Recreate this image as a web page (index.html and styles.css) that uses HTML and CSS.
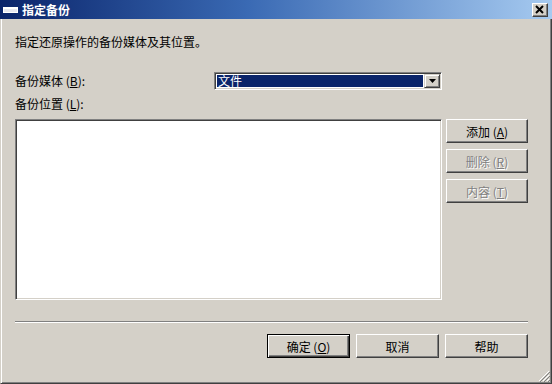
FILE: index.html
```html
<!DOCTYPE html>
<html lang="zh-CN">

<head>
    <meta charset="UTF-8">
    <title>指定备份</title>
    <link rel="stylesheet" href="styles.css">
</head>

<body>
    <div class="dialog">
        <div class="titlebar">
            <svg class="title-icon" width="16" height="8" viewBox="0 0 16 8">
                <rect x="0.5" y="1.5" width="14" height="5" fill="#e8e8f0" stroke="#ffffff" />
                <rect x="1" y="2" width="13" height="1" fill="#ffffff" />
            </svg>
            <span class="title">指定备份</span>
            <button class="close-btn">
                <svg width="10" height="9" viewBox="0 0 10 9">
                    <path d="M1 1 L8 8 M8 1 L1 8" stroke="#000" stroke-width="2" />
                </svg>
            </button>
        </div>

        <div class="body">
            <p class="desc">指定还原操作的备份媒体及其位置。</p>

            <div class="media-row">
                <label class="label">备份媒体 (<u>B</u>):</label>
                <div class="combo">
                    <span class="combo-value">文件</span>
                    <span class="combo-arrow">
                        <svg width="7" height="4" viewBox="0 0 7 4"><path d="M0 0 H7 L3.5 4 Z" fill="#000" /></svg>
                    </span>
                </div>
            </div>

            <label class="label loc-label">备份位置 (<u>L</u>):</label>

            <div class="main-row">
                <div class="listbox"></div>
                <div class="side-buttons">
                    <button class="btn">添加 (<u>A</u>)</button>
                    <button class="btn disabled">删除 (<u>R</u>)</button>
                    <button class="btn disabled">内容 (<u>T</u>)</button>
                </div>
            </div>

            <div class="separator"></div>

            <div class="footer">
                <button class="btn default">确定 (<u>O</u>)</button>
                <button class="btn">取消</button>
                <button class="btn">帮助</button>
            </div>
        </div>

        <svg class="grip" width="12" height="12" viewBox="0 0 12 12">
            <path d="M11 1 L1 11 M11 5 L5 11 M11 9 L9 11" stroke="#ffffff" stroke-width="1" />
            <path d="M12 2 L2 12 M12 6 L6 12 M12 10 L10 12" stroke="#808080" stroke-width="1" />
        </svg>
    </div>
</body>

</html>
```

FILE: styles.css
```css
body {
    margin: 0;
    font-family: "Noto Sans CJK SC", "Liberation Sans", sans-serif;
    font-size: 12px;
    background: #d4d0c8;
}

.dialog {
    position: relative;
    width: 552px;
    height: 384px;
    box-sizing: border-box;
    background: #d4d0c8;
    border-left: 1px solid #d4d0c8;
    border-right: 1px solid #404040;
    border-bottom: 1px solid #404040;
    box-shadow: inset 1px 0 #ffffff, inset -1px -1px #808080;
}

.titlebar {
    height: 19px;
    margin-left: -1px;
    margin-right: -1px;
    display: flex;
    align-items: center;
    background: linear-gradient(to right, #0a246a, #3a6ab4 45%, #a6caf0);
    color: #fff;
}

.title-icon {
    margin-left: 3px;
    margin-right: 3px;
}

.title {
    font-weight: bold;
    font-size: 12px;
    line-height: 19px;
}

.close-btn {
    margin-left: auto;
    margin-right: 4px;
    width: 16px;
    height: 14px;
    padding: 0;
    display: flex;
    align-items: center;
    justify-content: center;
    background: #d4d0c8;
    border: 1px solid;
    border-color: #ffffff #404040 #404040 #ffffff;
    box-shadow: inset -1px -1px #808080;
}

.body {
    padding: 16px 23px 0 14px;
}

.desc {
    margin: 0;
    line-height: 14px;
    color: #000;
}

.label {
    line-height: 14px;
    color: #000;
}

.label u,
.btn u {
    text-decoration: underline;
}

.media-row {
    margin-top: 23px;
    height: 18px;
    display: flex;
    align-items: center;
}

.media-row .label {
    width: 199px;
}

.combo {
    width: 228px;
    height: 18px;
    box-sizing: border-box;
    display: flex;
    border: 1px solid;
    border-color: #808080 #ffffff #ffffff #808080;
    box-shadow: inset 1px 1px #404040, inset -1px -1px #d4d0c8;
    background: #fff;
    padding: 2px;
}

.combo-value {
    flex: 1;
    background: #0a246a;
    color: #fff;
    line-height: 12px;
    padding-left: 1px;
    outline: 1px dotted #ffffff;
}

.combo-arrow {
    width: 16px;
    margin: -1px -1px -1px 1px;
    box-sizing: border-box;
    display: flex;
    align-items: center;
    justify-content: center;
    background: #d4d0c8;
    border: 1px solid;
    border-color: #d4d0c8 #404040 #404040 #d4d0c8;
    box-shadow: inset 1px 1px #ffffff, inset -1px -1px #808080;
}

.loc-label {
    display: block;
    margin-top: 7px;
}

.main-row {
    margin-top: 8px;
    display: flex;
    gap: 4px;
}

.listbox {
    width: 428px;
    height: 181px;
    box-sizing: border-box;
    background: #fff;
    border: 1px solid;
    border-color: #808080 #ffffff #ffffff #808080;
    box-shadow: inset 1px 1px #404040, inset -1px -1px #d4d0c8;
}

.side-buttons {
    display: flex;
    flex-direction: column;
    gap: 6px;
}

.btn {
    width: 82px;
    height: 24px;
    padding: 0;
    box-sizing: border-box;
    font-family: "Noto Sans CJK SC", "Liberation Sans", sans-serif;
    font-size: 12px;
    color: #000;
    background: #d4d0c8;
    border: 1px solid;
    border-color: #ffffff #404040 #404040 #ffffff;
    box-shadow: inset -1px -1px #808080;
}

.btn.disabled {
    color: #808080;
    text-shadow: 1px 1px #ffffff;
}

.btn.default {
    border: 1px solid #000;
    box-shadow: inset 1px 1px #ffffff, inset -1px -1px #404040, inset -2px -2px #808080;
}

.separator {
    margin-top: 21px;
    width: 513px;
    height: 1px;
    background: #808080;
    border-bottom: 1px solid #ffffff;
}

.footer {
    margin-top: 11px;
    display: flex;
    justify-content: flex-end;
    gap: 6px;
}

.footer .btn {
    width: 83px;
}

.grip {
    position: absolute;
    right: 1px;
    bottom: 1px;
}
```
